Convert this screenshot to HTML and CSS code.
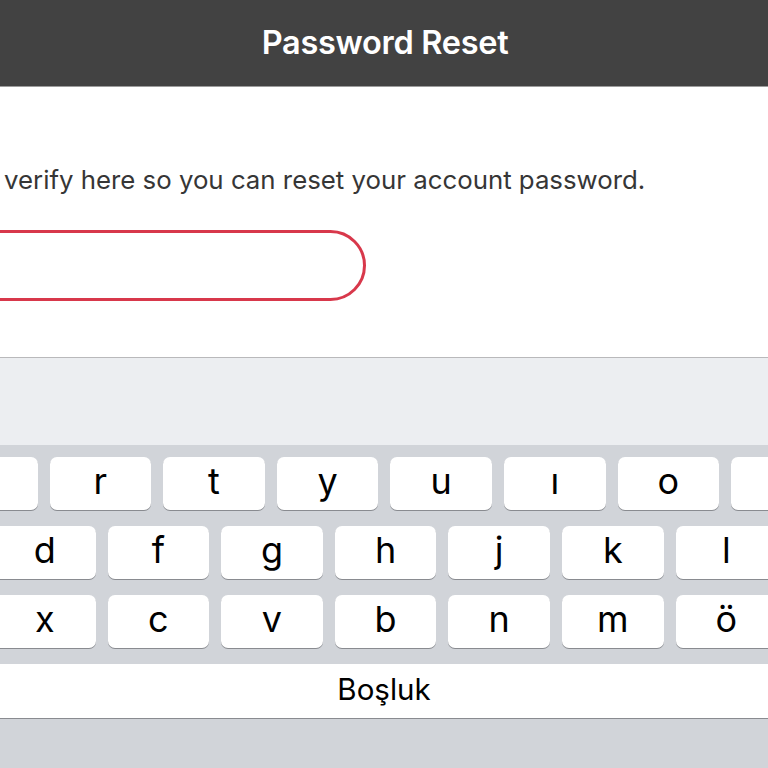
FILE: index.html
```html
<!DOCTYPE html>
<html lang="en">
<head>
  <meta charset="UTF-8" />
  <meta name="viewport" content="width=device-width, initial-scale=1.0" />
  <title>Password Reset</title>
  <link rel="stylesheet" href="styles.css">
</head>
<body>

  <!-- Navbar -->
  <header class="top-bar">
    <h1 class="top-title">Password Reset</h1>
  </header>

  <!-- Form -->
  <section class="reset-form">
    <p class="reset-text">verify here so you can reset your account password.</p>
    <div class="reset-input"></div>
  </section>

  <!-- Keyboard -->
  <section class="keyboard">
    <div class="suggest-bar"></div>
    <div class="keys">
      <div class="key-row row-top">
        <div class="key"></div>
        <div class="key">r</div>
        <div class="key">t</div>
        <div class="key">y</div>
        <div class="key">u</div>
        <div class="key">ı</div>
        <div class="key">o</div>
        <div class="key"></div>
      </div>
      <div class="key-row row-mid">
        <div class="key">d</div>
        <div class="key">f</div>
        <div class="key">g</div>
        <div class="key">h</div>
        <div class="key">j</div>
        <div class="key">k</div>
        <div class="key">l</div>
      </div>
      <div class="key-row row-mid">
        <div class="key">x</div>
        <div class="key">c</div>
        <div class="key">v</div>
        <div class="key">b</div>
        <div class="key">n</div>
        <div class="key">m</div>
        <div class="key">ö</div>
      </div>
      <div class="space-key">Boşluk</div>
    </div>
  </section>

</body>
</html>
```

FILE: styles.css
```css
* {
  margin: 0;
  padding: 0;
  box-sizing: border-box;
  font-family: 'Inter', 'Liberation Sans', sans-serif;
}

body {
  width: 768px;
  height: 768px;
  overflow: hidden;
  background: #ffffff;
}

/* ========== Top Bar ========== */
.top-bar {
  height: 87px;
  background: #424242;
  border-bottom: 1px solid #9c9c9c;
  display: flex;
  justify-content: center;
  align-items: center;
}

.top-title {
  color: #ffffff;
  font-size: 32.5px;
  font-weight: 600;
  letter-spacing: -0.3px;
  margin-left: 2px;
  margin-top: -1px;
}

/* ========== Form ========== */
.reset-form {
  height: 270px;
  padding-top: 77px;
  padding-left: 4px;
}

.reset-text {
  color: #363636;
  font-size: 25.8px;
  line-height: 32px;
}

.reset-input {
  width: 410px;
  height: 71px;
  margin-top: 34px;
  margin-left: -48px;
  border: 3px solid #d8384b;
  border-radius: 36px;
}

/* ========== Keyboard ========== */
.keyboard {
  border-top: 1px solid #b9b9bb;
}

.suggest-bar {
  height: 87px;
  background: #eceef1;
}

.keys {
  height: 323px;
  background: #d1d4d9;
  padding-top: 12px;
  display: flex;
  flex-direction: column;
  gap: 16px;
}

.key-row {
  display: flex;
  gap: 12px;
}

.row-top {
  margin-left: -64px;
}

.row-mid {
  margin-left: -6px;
}

.key {
  flex: 0 0 101.6px;
  height: 53px;
  background: #ffffff;
  border-radius: 7px;
  box-shadow: 0 1px 0 #898b90;
  display: flex;
  justify-content: center;
  align-items: center;
  color: #000000;
  font-size: 36px;
  font-weight: 400;
  padding-bottom: 6px;
}

.space-key {
  height: 54px;
  background: #ffffff;
  box-shadow: 0 1px 0 #898b90;
  display: flex;
  justify-content: center;
  align-items: center;
  color: #000000;
  font-size: 29.5px;
  padding-bottom: 4px;
}
```
